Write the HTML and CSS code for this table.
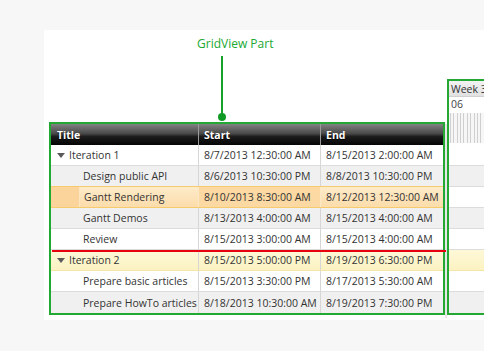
FILE: index.html
```html
<!DOCTYPE html>
<html>
<head>
<meta charset="utf-8">
<link rel="stylesheet" href="styles.css">
</head>
<body>
<div class="panel">
  <div class="left">
    <div class="callout-text">GridView Part</div>
    <div class="callout-line"></div>
    <div class="callout-dot"></div>
    <div class="grid">
      <div class="row head">
        <div class="cell title">Title</div>
        <div class="cell">Start</div>
        <div class="cell">End</div>
      </div>
      <div class="body">
        <div class="row">
          <div class="cell title parent"><span class="tri"></span>Iteration 1</div>
          <div class="cell">8/7/2013 12:30:00 AM</div>
          <div class="cell">8/15/2013 2:00:00 AM</div>
        </div>
        <div class="row alt">
          <div class="cell title child"><span class="indent"></span>Design public API</div>
          <div class="cell">8/6/2013 10:30:00 PM</div>
          <div class="cell">8/8/2013 10:30:00 PM</div>
        </div>
        <div class="row selected">
          <div class="cell title child"><span class="indent"></span>Gantt Rendering</div>
          <div class="cell current">8/10/2013 8:30:00 AM</div>
          <div class="cell">8/12/2013 12:30:00 AM</div>
        </div>
        <div class="row alt">
          <div class="cell title child"><span class="indent"></span>Gantt Demos</div>
          <div class="cell">8/13/2013 4:00:00 AM</div>
          <div class="cell">8/15/2013 4:00:00 AM</div>
        </div>
        <div class="row">
          <div class="cell title child"><span class="indent"></span>Review</div>
          <div class="cell">8/15/2013 3:00:00 AM</div>
          <div class="cell">8/15/2013 4:00:00 AM</div>
        </div>
        <div class="row hover">
          <div class="cell title parent"><span class="tri"></span>Iteration 2</div>
          <div class="cell">8/15/2013 5:00:00 PM</div>
          <div class="cell">8/19/2013 6:30:00 PM</div>
        </div>
        <div class="row">
          <div class="cell title child"><span class="indent"></span>Prepare basic articles</div>
          <div class="cell">8/15/2013 3:30:00 PM</div>
          <div class="cell">8/17/2013 5:30:00 AM</div>
        </div>
        <div class="row alt last">
          <div class="cell title child"><span class="indent"></span>Prepare HowTo articles</div>
          <div class="cell">8/18/2013 10:30:00 AM</div>
          <div class="cell">8/19/2013 7:30:00 PM</div>
        </div>
        <div class="drop-line"></div>
      </div>
    </div>
  </div>
  <div class="splitter"></div>
  <div class="chart">
    <div class="chart-week">Week 3</div>
    <div class="chart-day">06</div>
    <div class="chart-ticks"></div>
    <div class="crow"></div>
    <div class="crow alt"></div>
    <div class="crow"></div>
    <div class="crow alt"></div>
    <div class="crow"></div>
    <div class="crow hover"></div>
    <div class="crow"></div>
    <div class="crow alt last"></div>
  </div>
</div>
</body>
</html>
```

FILE: styles.css
```css
html, body {
  margin: 0;
  padding: 0;
}
body {
  background: #f7f7f7;
  overflow: hidden;
  font-family: "Open Sans", "Noto Sans", sans-serif;
  color: #333;
}
.panel {
  margin: 30px 0 0 44px;
  width: 480px;
  height: 290px;
  box-sizing: border-box;
  padding-bottom: 5px;
  background: #fff;
  display: flex;
  align-items: flex-end;
}
.left {
  padding-left: 5px;
  display: flex;
  flex-direction: column;
  flex: none;
}
.callout-text {
  margin-left: 148px;
  margin-bottom: 4px;
  font-size: 12px;
  line-height: 16px;
  color: #20a832;
  white-space: nowrap;
}
.callout-line {
  margin-left: 172px;
  width: 2px;
  height: 58px;
  background: #17a12b;
}
.callout-dot {
  margin-left: 169px;
  width: 8px;
  height: 8px;
  margin-top: -1px;
  border-radius: 50%;
  background: #119a26;
}
.grid {
  margin-top: 1px;
  width: 396px;
  box-sizing: border-box;
  border: 2px solid #22a833;
  font-size: 10.5px;
}
.row {
  display: grid;
  grid-template-columns: 148px 122px 122px;
  height: 21px;
  box-sizing: border-box;
  border-bottom: 1px solid #dcdcdc;
  background: #fff;
}
.row.last {
  border-bottom: none;
}
.cell {
  display: flex;
  align-items: center;
  padding-left: 5px;
  border-right: 1px solid #d6d6d6;
  white-space: nowrap;
  overflow: hidden;
}
.cell:last-child {
  border-right: none;
}
.row.head {
  border-bottom: none;
  background: linear-gradient(#828282, #4a4a4a 45%, #1c1c1c 60%, #050505);
  color: #fff;
  font-weight: bold;
  text-shadow: 0 1px 1px #000;
}
.row.head .cell {
  border-right: 1px solid #9a9a9a;
}
.row.head .cell:last-child {
  border-right: none;
}
.row.head .title {
  padding-left: 6px;
}
.body {
  position: relative;
}
.row.alt {
  background: #f0f0f0;
}
.title.parent {
  padding-left: 6px;
}
.tri {
  width: 0;
  height: 0;
  border-left: 4px solid transparent;
  border-right: 4px solid transparent;
  border-top: 5px solid #5a5a5a;
  margin-right: 4px;
}
.title.child {
  padding-left: 0;
}
.indent {
  align-self: stretch;
  width: 28px;
  margin-right: 4px;
  flex: none;
}
.row.selected {
  background: linear-gradient(#fdebc9, #fcdcaa);
  border-top: 1px solid #f6cb6e;
  border-bottom: 1px solid #f6cb6e;
  margin-top: -1px;
  height: 22px;
}
.row.selected .cell {
  border-right-color: #fbe9c8;
}
.row.selected .indent {
  background: #fbd49b;
  border-right: 1px solid #fde6c0;
}
.row.selected .current {
  background: #fcd8a2;
}
.row.hover {
  background: linear-gradient(#fdf8d8, #fcf2c2);
  border-bottom-color: #f3e6a6;
}
.drop-line {
  position: absolute;
  left: 1px;
  right: -3px;
  top: 105px;
  height: 2px;
  background: #e8000c;
}
.splitter {
  flex: none;
  width: 2px;
  height: 194px;
  margin-bottom: -3px;
  background: #e6e6e6;
}
.chart {
  flex: 1;
  height: 236px;
  box-sizing: border-box;
  border: 2px solid #22a833;
  overflow: hidden;
  font-size: 10.5px;
  color: #333;
}
.chart-week {
  height: 16px;
  box-sizing: border-box;
  padding-left: 2px;
  line-height: 16px;
  background: linear-gradient(#f2f2f2, #e1e1e1);
  border-bottom: 1px solid #d0d0d0;
  white-space: nowrap;
  color: #333;
}
.chart-day {
  height: 16px;
  padding-left: 2px;
  line-height: 15px;
  white-space: nowrap;
  color: #444;
}
.chart-ticks {
  height: 32px;
  box-sizing: border-box;
  border-bottom: 2px solid #fff;
  background: repeating-linear-gradient(to right, #cfcfcf 0 1px, #f6f6f6 1px 3.37px);
  background-position: 1px 0;
}
.crow {
  height: 21px;
  box-sizing: border-box;
  border-bottom: 1px solid #dcdcdc;
  background: #fff;
}
.crow.alt {
  background: #f0f0f0;
}
.crow.hover {
  background: linear-gradient(#fdf8d8, #fcf2c2);
  border-bottom-color: #f3e6a6;
}
.crow.last {
  border-bottom: none;
}
```
